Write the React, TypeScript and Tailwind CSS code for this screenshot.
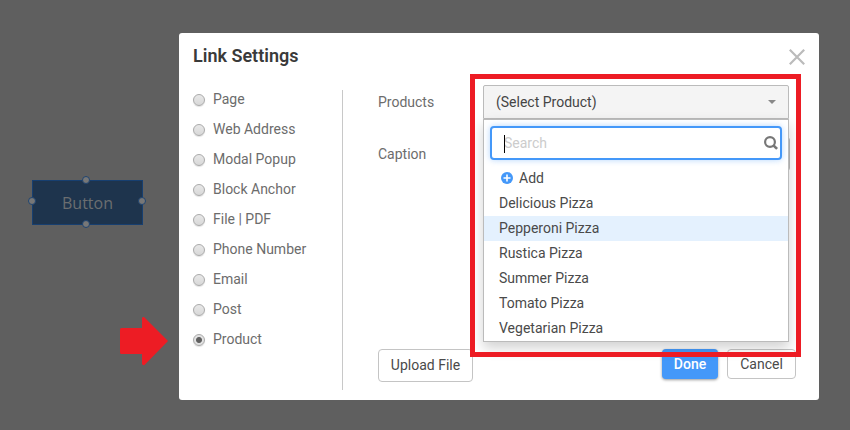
import { useState } from "react";

const linkTypes = [
    "Page",
    "Web Address",
    "Modal Popup",
    "Block Anchor",
    "File | PDF",
    "Phone Number",
    "Email",
    "Post",
    "Product",
];

const products = [
    "Delicious Pizza",
    "Pepperoni Pizza",
    "Rustica Pizza",
    "Summer Pizza",
    "Tomato Pizza",
    "Vegetarian Pizza",
];

function CanvasButton() {
    const handle = "absolute size-2 rounded-full border border-[#1f4470] bg-[#777]";

    return (
        <div className="relative w-[111px]">
            <button
                type="button"
                className="block h-[45px] w-full border border-[#173f70] bg-[#1e344d] font-['Open_Sans',sans-serif] text-base font-medium text-[#6b6e70]"
            >
                Button
            </button>
            <span className={`${handle} -top-1 left-[50px]`} />
            <span className={`${handle} -bottom-[3px] left-[50px]`} />
            <span className={`${handle} -left-1 top-[17px]`} />
            <span className={`${handle} -right-[3px] top-[17px]`} />
        </div>
    );
}

function ProductDropdown() {
    const [product, setProduct] = useState("");
    const [search, setSearch] = useState("");
    const visible = products.filter((name) => name.toLowerCase().includes(search.toLowerCase()));

    return (
        <div className="relative">
            <select
                id="product"
                value={product}
                onChange={(e) => setProduct(e.target.value)}
                className="block h-[34px] w-full appearance-none rounded-t-xs border border-[#bbb] bg-[#f4f4f4] px-3 text-[#444]"
            >
                <option value="">(Select Product)</option>
                {products.map((name) => (
                    <option key={name}>{name}</option>
                ))}
            </select>
            <svg className="pointer-events-none absolute right-[13px] top-[15px] h-1 w-2" viewBox="0 0 8 4">
                <path d="M0 0h8L4 4z" fill="#888" />
            </svg>

            <div className="absolute inset-x-0 top-full z-10 border border-[#bbb] bg-white pt-1.5 shadow-[0_6px_12px_rgba(0,0,0,0.18)]">
                <div className="relative mx-1.5 mb-1.5">
                    <input
                        type="text"
                        aria-label="Search products"
                        placeholder="Search"
                        value={search}
                        onChange={(e) => setSearch(e.target.value)}
                        className="block h-[34px] w-full rounded border-2 border-[#4498f9] bg-white pl-3 pr-8 text-[#333] shadow-[0_0_6px_rgba(68,152,249,0.4)] outline-none placeholder:text-[#ccc]"
                    />
                    <span className="absolute left-3.5 top-[9px] h-[18px] w-px bg-black" />
                    <svg className="absolute right-1 top-2.5 size-3.5" viewBox="0 0 14 14" fill="none" stroke="#777">
                        <circle cx="6" cy="6" r="4.9" strokeWidth="2.2" />
                        <path d="M9.5 9.5l3.6 3.4" strokeWidth="2.6" />
                    </svg>
                </div>
                <button type="button" className="flex h-[25px] w-full items-center gap-1.5 pb-0.5 pl-[17px] text-[#4a4a4a]">
                    <svg className="size-3" viewBox="0 0 12 12">
                        <circle cx="6" cy="6" r="6" fill="#4498f9" />
                        <path d="M6 2.500v7M2.500 6h7" stroke="#fff" strokeWidth="1.6" />
                    </svg>
                    Add
                </button>
                <ul>
                    {visible.map((name) => (
                        <li key={name}>
                            <button
                                type="button"
                                onClick={() => setProduct(name)}
                                className={`block h-[25px] w-full pb-0.5 pl-[15px] text-left text-[#4a4a4a] ${name === "Pepperoni Pizza" ? "bg-[#e4f1fe]" : "bg-white"}`}
                            >
                                {name}
                            </button>
                        </li>
                    ))}
                </ul>
            </div>

            {/* Highlight frame around the open list */}
            <div className="pointer-events-none absolute -left-[13px] -right-3 -top-[11px] z-20 h-[283px] border-5 border-[#ed1c24]" />
        </div>
    );
}

export default function App() {
    const [linkType, setLinkType] = useState("Product");

    return (
        <main className="flex min-h-screen items-start bg-[#5f5f5f] pr-[31px] pt-[33px] font-[Roboto,sans-serif] text-sm text-[#6c6c6c]">
            <div className="flex w-[179px] shrink-0 flex-col pt-[147px]">
                <div className="pl-8">
                    <CanvasButton />
                </div>
                <svg className="ml-[120px] mt-[91px] h-[50px] w-12" viewBox="0 0 48 50">
                    <path
                        d="M1.500 12H22V2Q22.500 .5 24 1L48 25 24.500 49Q22.500 49.500 22 48V38H1.500Q0 38 0 36.500V13.500Q0 12 1.500 12z"
                        fill="#ed1c24"
                    />
                </svg>
            </div>

            <section role="dialog" aria-label="Link Settings" className="min-w-0 flex-1 rounded-[3px] bg-white pb-2.5 pl-3.5">
                <header className="flex h-[52px] items-start justify-between pr-3.5">
                    <h1 className="pt-[9px] text-lg font-semibold text-[#3a3a3a]">Link Settings</h1>
                    <button type="button" aria-label="Close" className="pt-4">
                        <svg className="size-4" viewBox="0 0 16 16" fill="none" stroke="#bbb" strokeWidth="2.2">
                            <path d="M.8.8l14.400 14.400M15.200.8L.8 15.200" />
                        </svg>
                    </button>
                </header>

                <div className="flex">
                    <fieldset aria-label="Link type" className="mt-[5px] h-[300px] w-[150px] shrink-0 border-r border-[#c8c8c8]">
                        {linkTypes.map((type) => (
                            <label key={type} className="flex h-5 items-start gap-2 leading-[18px] not-last:mb-2.5">
                                <input
                                    type="radio"
                                    name="linkType"
                                    checked={linkType === type}
                                    onChange={() => setLinkType(type)}
                                    className="mt-1 size-3 appearance-none rounded-full border border-[#aaa] bg-linear-to-b from-[#e8e8e8] to-[#d8d8d8] shadow-[0_1px_1px_rgba(0,0,0,0.12)] checked:bg-[radial-gradient(circle,#606060_0_2.500px,#e2e2e2_3.500px)]"
                                />
                                {type}
                            </label>
                        ))}
                    </fieldset>

                    <div className="flex min-w-0 flex-1 flex-col pb-2 pl-[35px]">
                        <div className="grid grid-cols-[105px_1fr] items-center gap-y-[18px] pr-[30px]">
                            <label htmlFor="product">Products</label>
                            <ProductDropdown />
                            <label htmlFor="caption">Caption</label>
                            <input id="caption" type="text" className="-mr-px h-[34px] rounded-[3px] border border-[#bbb] px-3" />
                        </div>

                        <footer className="mt-auto flex items-start pr-[23px]">
                            <button type="button" className="h-[33px] w-[95px] rounded border border-[#c4c4c4] bg-white pb-0.5 text-[#4a4a4a]">
                                Upload File
                            </button>
                            <button
                                type="button"
                                className="ml-auto h-[30px] w-14 rounded bg-[#4498f9] font-medium text-white shadow-[0_1px_3px_rgba(0,0,0,0.4)]"
                            >
                                Done
                            </button>
                            <button type="button" className="ml-[9px] h-[30px] w-[69px] rounded border border-[#c4c4c4] bg-white text-[#4a4a4a]">
                                Cancel
                            </button>
                        </footer>
                    </div>
                </div>
            </section>
        </main>
    );
}
